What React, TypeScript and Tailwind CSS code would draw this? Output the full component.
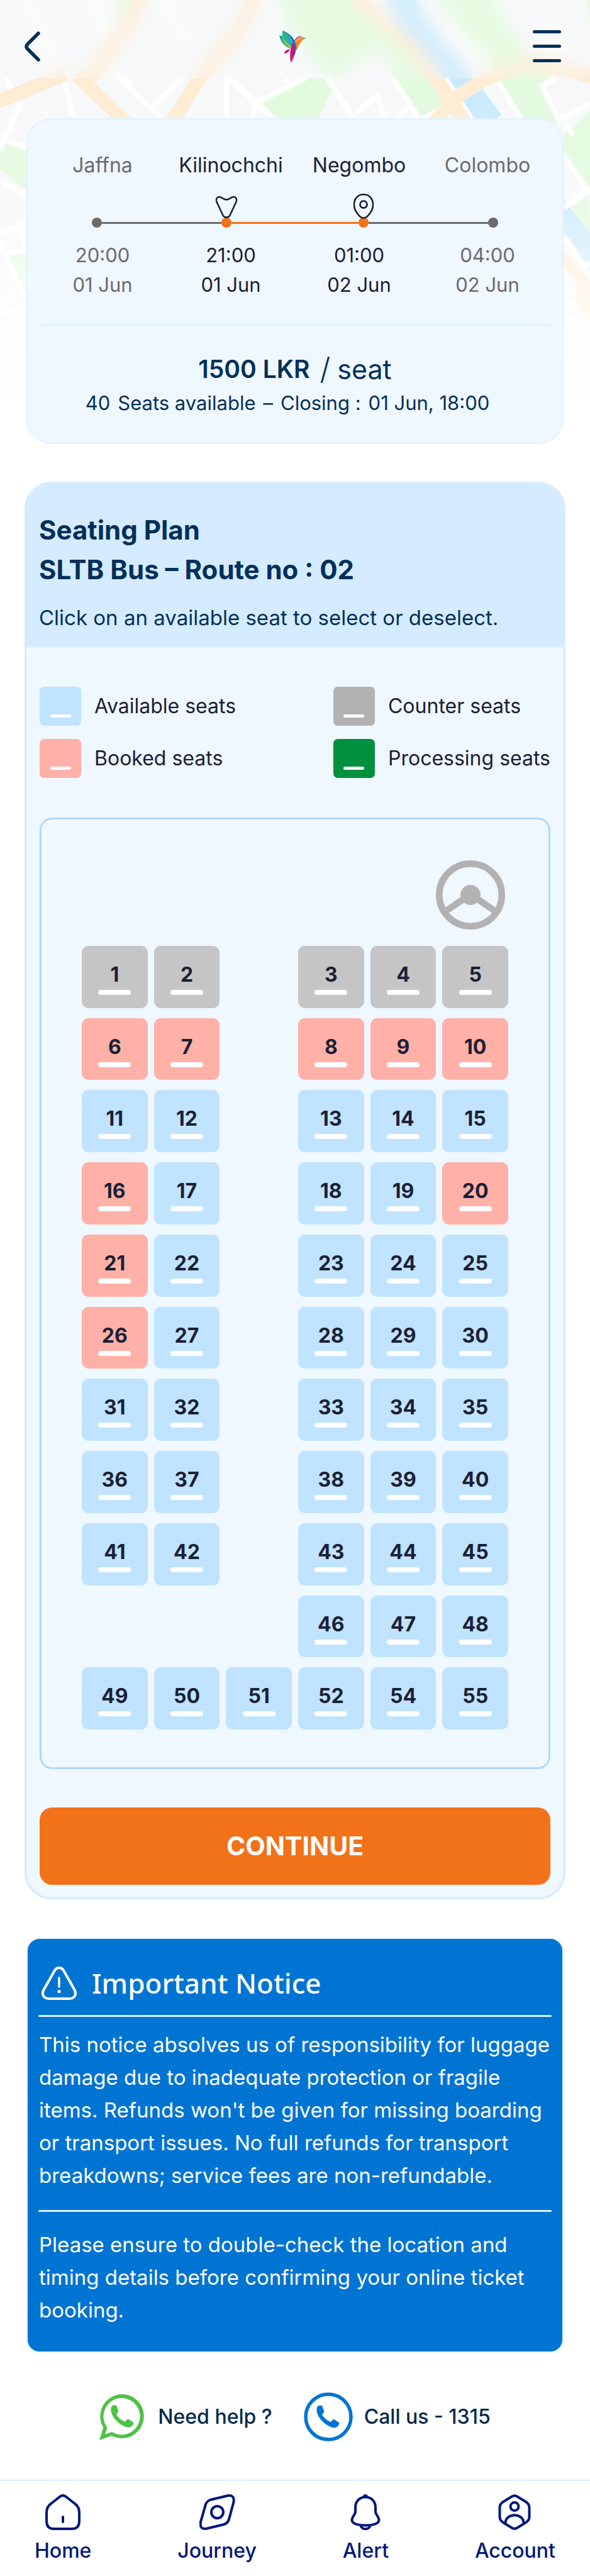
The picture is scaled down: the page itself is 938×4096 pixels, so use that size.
import { useState } from "react";

type Status = "available" | "counter" | "booked" | "processing";

const seatColor: Record<Status, string> = {
  available: "bg-[#c0e3ff]",
  counter: "bg-[#c5c5c5]",
  booked: "bg-[#ffb1a8]",
  processing: "bg-[#00913e]",
};

const booked = [6, 7, 8, 9, 10, 16, 20, 21, 26];

const rows: (number | null)[][] = [
  [1, 2, null, 3, 4, 5],
  [6, 7, null, 8, 9, 10],
  [11, 12, null, 13, 14, 15],
  [16, 17, null, 18, 19, 20],
  [21, 22, null, 23, 24, 25],
  [26, 27, null, 28, 29, 30],
  [31, 32, null, 33, 34, 35],
  [36, 37, null, 38, 39, 40],
  [41, 42, null, 43, 44, 45],
  [null, null, null, 46, 47, 48],
  [49, 50, 51, 52, 54, 55],
];

const stops = [
  { name: "Jaffna", time: "20:00", date: "01 Jun", active: false },
  { name: "Kilinochchi", time: "21:00", date: "01 Jun", active: true },
  { name: "Negombo", time: "01:00", date: "02 Jun", active: true },
  { name: "Colombo", time: "04:00", date: "02 Jun", active: false },
];

function MapBackdrop() {
  return (
    <svg
      viewBox="0 0 1440 1100"
      className="absolute inset-x-0 top-0 w-full"
      fill="none"
      aria-hidden="true"
    >
      <defs>
        <linearGradient id="fade" x1="0" y1="0" x2="0" y2="1">
          <stop offset="0.15" stopColor="#fff" stopOpacity="0" />
          <stop offset="0.45" stopColor="#fff" stopOpacity="0.25" />
          <stop offset="0.7" stopColor="#fff" stopOpacity="0.75" />
          <stop offset="0.95" stopColor="#fff" stopOpacity="1" />
        </linearGradient>
      </defs>
      <path d="M0 0H1440V1100H0Z" fill="#f6f8fa" />
      <g fill="#e1fadd">
        <path d="M278 0h60l-20 50-24-8ZM680 0H862L1062 192 1080 255 1030 285 964 192 938 120 880 150 812 192 780 170 700 60Z" />
        <path d="M753 192H794L812 217 776 292H680L640 252ZM1070 0H1203L1290 130 1354 192 1322 209 1368 300H1280L1212 192Z" />
        <path d="M13 350 66 368V464L0 414V382ZM14 619 66 616V742H56ZM1440 0V60L1428 0ZM1440 273 1376 328V382L1436 460 1440 457ZM1438 474 1393 506 1440 569Z" />
      </g>
      <path d="M973-10 1010 60 1040 100 1116 192 1198 300" stroke="#c8eafc" strokeWidth="66" />
      <path d="M1376 486 1440 569V658L1425 646 1376 586Z" fill="#c8eafc" />
      <g stroke="#fff" strokeWidth="13">
        <path d="M60 0 120 110 156 197 184 300M14 192 47 256 27 300M0 440 66 478M0 570 66 545M0 590 66 740M50 550 66 620M0 768 66 750M0 875 66 862M14 190 48 258 0 360M18 345 66 362M14 619 66 612" />
        <path d="M230 0 260 120 294 192 404 300M400 0 470 130M432 192 436 197 376 260M553 190V300M562 192 676 300M745 192 629 248 611 300M800 192 870 300M868 277 920 235 946 300M960 192 1030 300M960 300 1003 255M695 192 708 208M318 192 308 210" />
        <path d="M1085 60 1190 150 1212 192 1278 300M1088 192 1157 300M1354 192 1322 209 1368 300M1370 290 1440 255M1376 380 1436 466M1376 508 1440 462M1376 576 1428 652 1440 640M1376 742 1410 738M1376 784 1440 770M1376 930 1440 928M1330 60 1400 140M1400 330 1376 300" />
      </g>
      <path d="M1030 283 1062 268 1060 300H1036Z" fill="#fff" />
      <g stroke="#feebd2" strokeWidth="34">
        <path d="M345-10 325 40 220 190M624-10 580 80 487 190 418 300M866-10 1000 110 1065 192 1136 300" />
        <path d="M-10 250 60 222 160 180M185 180 210 205 308 300M1060 300 1102 245 1185 192 1300 150 1460 190" />
      </g>
      <path d="M1376 612 1403 640 1440 687V793L1410 755 1403 681 1376 652Z" fill="#feebd2" />
      <path d="M0 0H1440V1100H0Z" fill="url(#fade)" />
    </svg>
  );
}

function Logo() {
  return (
    <svg viewBox="318 95 198 240" className="h-[52px] w-[43px]" aria-hidden="true">
      <defs>
        <linearGradient id="wing" x1="0" y1="0" x2="1" y2="0.4">
          <stop offset="0" stopColor="#2bb673" />
          <stop offset="1" stopColor="#27aae1" />
        </linearGradient>
        <linearGradient id="body" x1="0" y1="0" x2="1" y2="0">
          <stop offset="0" stopColor="#e31b4c" />
          <stop offset="0.5" stopColor="#e20a86" />
          <stop offset="1" stopColor="#92278f" />
        </linearGradient>
      </defs>
      <path d="M428 172C442 145 466 130 486 145L516 156C478 162 470 200 443 244Z" fill="#f9a13a" />
      <path d="M516 156C480 162 462 178 452 215L443 244C440 220 436 200 440 190 460 165 480 156 516 156Z" fill="#e97d35" />
      <path d="M428 172C442 145 466 130 486 145 466 138 448 150 430 178Z" fill="#b64bb0" />
      <path d="M470 152C480 147 500 150 514 155 495 157 485 154 470 152Z" fill="#6d8fd6" />
      <path d="M318 134 342 136C345 175 380 210 400 231 355 215 325 175 318 134Z" fill="#18a79d" />
      <path d="M342 130C346 170 385 205 405 212L400 231C365 212 335 180 342 130Z" fill="#8cc63f" />
      <path d="M342 96C420 135 455 200 436 262L425 290C420 250 415 215 406 213 355 180 335 150 342 96Z" fill="url(#wing)" />
      <path d="M342 96C420 130 452 190 438 250L425 295 428 210C420 165 385 120 342 96Z" fill="#1072bd" />
      <path d="M417 182C440 230 435 285 403 335 392 290 396 225 417 182Z" fill="url(#body)" />
      <path d="M354 267C358 245 374 236 396 236 390 252 375 266 354 267Z" fill="#c0188c" />
    </svg>
  );
}

function Dot({ active, icon }: { active: boolean; icon?: React.ReactNode }) {
  return (
    <span className={`relative size-4 rounded-full ${active ? "bg-[#f27219]" : "bg-[#6b6b6b]"}`}>
      {icon}
    </span>
  );
}

function Timeline() {
  return (
    <div className="mx-[85px] mt-[59px] flex items-center">
      <Dot active={false} />
      <span className="h-[3px] flex-[190] bg-[#6b6b6b]" />
      <Dot
        active
        icon={
          <svg viewBox="0 0 54 56" className="absolute bottom-[15px] left-1/2 h-[36px] w-[35px] -translate-x-1/2" fill="none" stroke="#1b2035" strokeWidth="4" aria-hidden="true">
            <path d="M22 9C26 10.500 28 10.500 32 9L40 4.500C48 .5 54 7 51.500 15L35.500 49C32.500 55.500 21.500 55.500 18.500 49L2.500 15C0 7 6 .5 14 4.500Z" />
          </svg>
        }
      />
      <span className="h-[3px] flex-[202] bg-[#f27219]" />
      <Dot
        active
        icon={
          <svg viewBox="0 0 50 61" className="absolute bottom-[14px] left-1/2 h-[40px] w-[33px] -translate-x-1/2" fill="none" stroke="#1b2035" strokeWidth="4" aria-hidden="true">
            <path d="M25 2C10 2 2 13 2 27c0 11 6 20 14 28 5 5 13 5 18 0 8-8 14-17 14-28C48 13 40 2 25 2Z" />
            <circle cx="25" cy="26" r="8.500" />
          </svg>
        }
      />
      <span className="h-[3px] flex-[190] bg-[#6b6b6b]" />
      <Dot active={false} />
    </div>
  );
}

function TripCard() {
  return (
    <section className="relative mx-[42px] mt-[63px] rounded-[40px] border-2 border-[#e0f2ff] bg-[#eff7ff] px-[17px] pt-[49px] pb-[39px]">
      <div className="grid grid-cols-4 text-center text-[32px] leading-[48px]">
        {stops.map((s) => (
          <span key={s.name} className={s.active ? "text-[#1b2035]" : "text-[#6b6b6b]"}>
            {s.name}
          </span>
        ))}
      </div>
      <Timeline />
      <div className="mt-5 grid grid-cols-4 text-center text-[31px] leading-[47px]">
        {stops.map((s) => (
          <div key={s.name} className={s.active ? "text-[#1b2035]" : "text-[#6b6b6b]"}>
            <p>{s.time}</p>
            <p>{s.date}</p>
          </div>
        ))}
      </div>
      <div className="mt-[39px] h-[3px] rounded-full bg-[#e0f2ff]" />
      <p className="mt-[39px] flex items-center justify-center gap-4 text-[39px] leading-[60px] text-[#00305a]">
        <strong className="font-semibold">1500 LKR</strong>
        <span className="flex items-center gap-[11px] text-[43px]">
          <span className="text-[48px] font-light">/</span>
          seat
        </span>
      </p>
      <p className="flex justify-center gap-3 pr-[24px] text-[31px] leading-[48px] text-[#00305a]">
        <span>40</span>
        <span>Seats available</span>
        <span>–</span>
        <span>Closing :</span>
        <span>01 Jun, 18:00</span>
      </p>
    </section>
  );
}

function LegendItem({ color, label }: { color: string; label: string }) {
  return (
    <li className="flex items-center gap-[21px] whitespace-nowrap">
      <span className={`flex h-[62px] w-[66px] items-end justify-center rounded-[7px] pb-[13px] ${color}`}>
        <span className="h-[5px] w-[33px] rounded-sm bg-white" />
      </span>
      {label}
    </li>
  );
}

function SteeringWheel() {
  return (
    <svg viewBox="0 0 110 110" className="mr-[5px] ml-auto size-[110px]" fill="#b2b2b2" aria-hidden="true">
      <circle cx="55" cy="55" r="49.750" fill="none" stroke="#b2b2b2" strokeWidth="10.500" />
      <circle cx="55" cy="55" r="16" />
      <path d="M42 56.500 12 77 20 84 50 64ZM68 56.500 98 77 90 84 60 64Z" />
    </svg>
  );
}

function Seat({ n }: { n: number }) {
  const status: Status = n <= 5 ? "counter" : booked.includes(n) ? "booked" : "available";
  const [selected, setSelected] = useState(false);
  return (
    <button
      type="button"
      disabled={status !== "available"}
      aria-pressed={selected}
      onClick={() => setSelected(!selected)}
      className={`flex flex-col items-center rounded-[11px] pt-[26px] text-[32px] leading-[40px] font-bold text-[#1b2035] ${seatColor[selected ? "processing" : status]}`}
    >
      {n}
      <span className="mt-1 h-2 w-[52px] rounded bg-white" />
    </button>
  );
}

function SeatingCard() {
  return (
    <section className="relative mx-[39px] mt-[60px] overflow-hidden rounded-[43px] border-[3px] border-[#d5ebff] bg-[#eff7ff]">
      <div className="bg-[#d5ebff] px-[20px] pt-[42px] pb-[23px] text-[#00305a]">
        <h1 className="text-[42px] leading-[63px] font-bold">
          Seating Plan
          <br />
          SLTB Bus – Route no : 02
        </h1>
        <p className="mt-[21px] text-[33px] leading-[48px]">Click on an available seat to select or deselect.</p>
      </div>
      <div className="px-[21px] pt-[63px] pb-5">
        <ul className="grid grid-cols-[auto_auto] justify-between gap-y-[21px] text-[32px] text-[#1b2035]">
          <LegendItem color="bg-[#c0e3ff]" label="Available seats" />
          <LegendItem color="bg-[#b2b2b2]" label="Counter seats" />
          <LegendItem color="bg-[#ffb1a8]" label="Booked seats" />
          <LegendItem color="bg-[#00913e]" label="Processing seats" />
        </ul>
        <div className="mt-[63px] rounded-[20px] border-[3px] border-[#b2d8f5] px-16 pt-[65px] pb-[60px]">
          <SteeringWheel />
          <div className="mt-[26px] grid h-[1246px] grid-cols-6 grid-rows-11 gap-x-[10px] gap-y-4">
            {rows.flatMap((row, r) =>
              row.map((n, c) => (n === null ? <span key={`${r}-${c}`} /> : <Seat key={`${r}-${c}`} n={n} />)),
            )}
          </div>
        </div>
        <button
          type="button"
          className="mt-[61px] h-[123px] w-full rounded-[20px] bg-[#f27219] text-[41px] font-bold text-white"
        >
          CONTINUE
        </button>
      </div>
    </section>
  );
}

function Notice() {
  return (
    <section className="mx-[42px] mt-[61px] rounded-[21px] border-2 border-[#e0f2ff] bg-[#0074d3] px-[17px] pt-[38px] pb-10 text-white">
      <div className="flex items-center gap-[24px] pl-[5px]">
        <svg viewBox="0 0 56 53" className="h-[53px] w-[56px]" fill="none" stroke="#fff" strokeWidth="4" strokeLinecap="round" aria-hidden="true">
          <path d="M21 6C24.500.5 31.500.5 35 6L52.500 37C56.500 45 52 51 44 51H12C4 51-.5 45 3.500 37Z" />
          <path d="M28 18v14" strokeWidth="3.500" />
          <circle cx="28" cy="39.500" r="2.600" fill="#fff" stroke="none" />
        </svg>
        <h2 className="font-['Noto_Sans',sans-serif] text-[44px] leading-[64px] font-medium">Important Notice</h2>
      </div>
      <div className="mt-[19px] h-[3px] rounded-full bg-[#e0f2ff]" />
      <p className="mt-[18px] pl-[1px] text-[33px] leading-[52px] whitespace-nowrap">
        This notice absolves us of responsibility for luggage
        <br />
        damage due to inadequate protection or fragile
        <br />
        items. Refunds won't be given for missing boarding
        <br />
        or transport issues. No full refunds for transport
        <br />
        breakdowns; service fees are non-refundable.
      </p>
      <div className="mt-[29px] h-[3px] rounded-full bg-[#e0f2ff]" />
      <p className="mt-[26px] pl-[1px] text-[33px] leading-[52px] whitespace-nowrap">
        Please ensure to double-check the location and
        <br />
        timing details before confirming your online ticket
        <br />
        booking.
      </p>
    </section>
  );
}

const handset =
  "M19 20C20 17.500 25 16 27.500 18.500L30.500 27.500 27 32C30 37 35 41.500 41 43.500L43.500 40.500Q45 39 47 40L54 44.500C55 49 50 53.500 44 52.500 37 51 31 46 26 41 20 34 17 27 19 20Z";

function Help() {
  return (
    <div className="mt-[63px] flex items-center justify-center gap-[50px] text-[32px] font-medium text-[#00294a]">
      <a href="#help" className="flex items-center gap-[21px]">
        <svg viewBox="0 0 72 73" className="h-[73px] w-[72px]" fill="#4fc246" aria-hidden="true">
          <path fillRule="evenodd" d="M36.500 0a35 35 0 1 1-17 66L0 73 6.300 53A35 35 0 0 1 36.500 0ZM36.500 6A29.200 29.200 0 0 0 12.500 53L9 63.500 20 60A29.200 29.200 0 1 0 36.500 6Z" />
          <path d={handset} />
        </svg>
        Need help ?
      </a>
      <a href="tel:1315" className="flex items-center gap-[18px]">
        <svg viewBox="0 0 78 78" className="size-[78px]" fill="#0074d3" aria-hidden="true">
          <circle cx="39" cy="39" r="36" fill="none" stroke="#0074d3" strokeWidth="5.500" />
          <path d={handset} transform="translate(2 3.500)" />
        </svg>
        Call us - 1315
      </a>
    </div>
  );
}

const navItems = [
  {
    label: "Home",
    icon: (
      <>
        <path d="M23 4Q28 0 33 4L47 15Q54 20 54 29V43Q54 55 42 55H14Q2 55 2 43V29Q2 20 9 15Z" />
        <path d="M28 36v8" strokeLinecap="round" />
      </>
    ),
  },
  {
    label: "Journey",
    icon: (
      <>
        <path d="M17 9 44 2.500Q56 0 54.500 12L47 40Q45 46 39 48L12 54.500Q0 57 2 44L10 16Q12 11 17 9Z" />
        <circle cx="28.500" cy="28.500" r="9.500" />
      </>
    ),
  },
  {
    label: "Alert",
    icon: (
      <>
        <path d="M28 4.500C18 4.500 12 12 12 21V28C12 32 6.500 36 6.500 41 6.500 48 20 49.500 28 49.500S49.500 48 49.500 41C49.500 36 44 32 44 28V21C44 12 38 4.500 28 4.500Z" />
        <path d="M24 5 28 1.500 32 5M20.500 50C22 57 34 57 35.500 50" />
      </>
    ),
  },
  {
    label: "Account",
    icon: (
      <>
        <path d="M24 3.500Q28 1 32 3.500L46 12Q51.500 15.500 51.500 21V36Q51.500 41.500 46 45L32 53.500Q28 56 24 53.500L10 45Q4.500 41.500 4.500 36V21Q4.500 15.500 10 12Z" />
        <circle cx="28" cy="19.500" r="6.500" />
        <path d="M13.500 46C14 29 42 29 42.500 46" />
      </>
    ),
  },
];

function BottomNav() {
  return (
    <nav className="mt-[60px] flex justify-between border-t-[3px] border-[#e0f2ff] px-[55px] pt-[21px] pb-4">
      {navItems.map((item) => (
        <a key={item.label} href={`#${item.label.toLowerCase()}`} className="flex flex-col items-center text-[32px] leading-[48px] font-medium text-[#00187a]">
          <svg viewBox="0 0 57 57" className="mb-[9px] size-[57px]" fill="none" stroke="#00187a" strokeWidth="4" strokeLinejoin="round" aria-hidden="true">
            {item.icon}
          </svg>
          {item.label}
        </a>
      ))}
    </nav>
  );
}

export default function App() {
  return (
    <div className="relative bg-white font-['Inter',sans-serif]">
      <MapBackdrop />
      <header className="relative flex h-[125px] items-center justify-between bg-white/20 pt-[22px] pr-[46px] pl-[39px] backdrop-blur-[12px]">
        <button type="button" aria-label="Back" className="w-[45px]">
          <svg viewBox="0 0 26 48" className="h-12 w-[26px]" fill="none" stroke="#00305a" strokeWidth="5.500" strokeLinecap="round" aria-hidden="true">
            <path d="M22 3 5 20Q1 24 5 28L22 45" />
          </svg>
        </button>
        <Logo />
        <button type="button" aria-label="Menu" className="flex w-[45px] flex-col gap-[18px]">
          <span className="h-[5px] rounded-full bg-[#00305a]" />
          <span className="h-[5px] rounded-full bg-[#00305a]" />
          <span className="h-[5px] rounded-full bg-[#00305a]" />
        </button>
      </header>
      <TripCard />
      <SeatingCard />
      <Notice />
      <Help />
      <BottomNav />
    </div>
  );
}
